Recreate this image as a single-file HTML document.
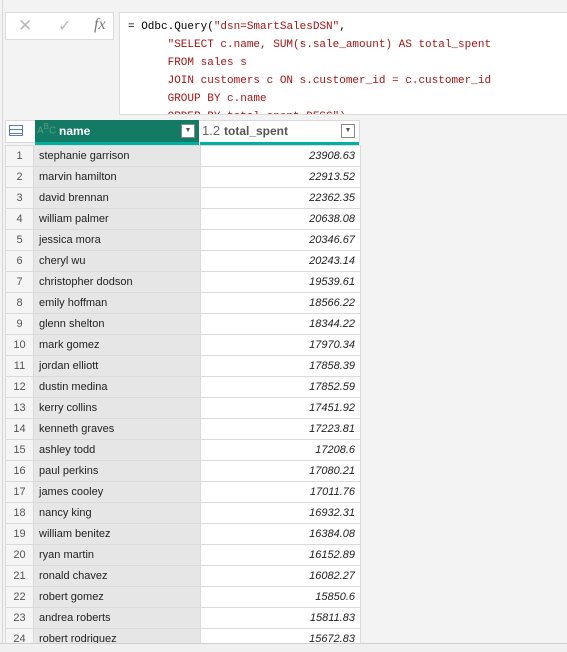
<!DOCTYPE html>
<html><head><style>
body{margin:0;width:567px;height:651px;background:#f3f3f3;font-family:"Liberation Sans",sans-serif;position:relative;overflow:hidden}
.abs{position:absolute}
#btns{left:5px;top:12px;width:109px;height:28px;background:#fff;border:1px solid #dcdcdc;box-sizing:border-box}
#fx{left:119px;top:12px;width:460px;height:103px;background:#fff;border:1px solid #dcdcdc;box-sizing:border-box;overflow:hidden}
#fx pre{margin:0;position:absolute;left:8px;top:5px;font-family:"Liberation Mono",monospace;font-size:11px;line-height:18px;color:#a31515}
table{position:absolute;left:5px;top:145px;border-collapse:collapse;font-size:11px;color:#222;table-layout:fixed}
td{border:1px solid #dadada;height:20px;padding:0 5px;white-space:nowrap;overflow:hidden}
td.n{width:19px;text-align:center;color:#555;background:#f5f5f5;padding:0 4px}
td.c{width:156px;background:#e6e6e6}
td.v{width:149px;background:#fff;text-align:right;font-style:italic}
#bottom{left:0;top:643px;width:567px;height:8px;background:#f0f0f0;border-top:1px solid #d0d0d0}
.dd{width:14px;height:14px;background:#fff;border:1px solid #888;box-sizing:border-box;font-size:7px;text-align:center;line-height:12px;color:#555}
</style></head><body>
<div class="abs" style="left:2px;top:0;width:1px;height:643px;background:#d8d8d8"></div>
<div class="abs" id="btns">
<span class="abs" style="left:12px;top:3px;font-size:17px;color:#bbb">✕</span>
<span class="abs" style="left:52px;top:3px;font-size:16px;color:#bbb">✓</span>
<span class="abs" style="left:88px;top:3px;font-size:16px;color:#777;font-family:'Liberation Serif',serif;font-style:italic">fx</span>
</div>
<div class="abs" id="fx"><pre><span style="color:#000">= Odbc.Query(</span>"dsn=SmartSalesDSN"<span style="color:#000">,</span>
      "SELECT c.name, SUM(s.sale_amount) AS total_spent
      FROM sales s
      JOIN customers c ON s.customer_id = c.customer_id
      GROUP BY c.name
      ORDER BY total_spent DESC")</pre></div>
<div class="abs" style="left:5px;top:120px;width:355px;height:23px;background:#fff;border:1px solid #dadada;box-sizing:border-box"></div>
<div class="abs" style="left:9px;top:125px;width:14px;height:11px;border:1px solid #5a7fb0;box-sizing:border-box;background:repeating-linear-gradient(#fff 0 3px,#5a7fb0 3px 4px)"></div>
<div class="abs" style="left:35px;top:120px;width:164px;height:22px;background:#137a63"></div>
<span class="abs" style="left:37px;top:122px;font-size:10px;color:#5b9b85">A<sup style="font-size:8px">B</sup>C</span>
<span class="abs" style="left:59px;top:124px;font-size:12px;color:#fff;font-weight:bold">name</span>
<div class="abs dd" style="left:181px;top:124px">▼</div>
<span class="abs" style="left:202px;top:123px;font-size:13px;color:#666">1.2</span>
<span class="abs" style="left:224px;top:124px;font-size:12px;color:#555;font-weight:bold">total_spent</span>
<div class="abs dd" style="left:341px;top:124px">▼</div>
<div class="abs" style="left:35px;top:142px;width:324px;height:3px;background:#00b0a0"></div>
<div class="abs" style="left:199px;top:142px;width:1px;height:3px;background:#fff"></div>
<table>
<tr><td class="n">1</td><td class="c">stephanie garrison</td><td class="v">23908.63</td></tr>
<tr><td class="n">2</td><td class="c">marvin hamilton</td><td class="v">22913.52</td></tr>
<tr><td class="n">3</td><td class="c">david brennan</td><td class="v">22362.35</td></tr>
<tr><td class="n">4</td><td class="c">william palmer</td><td class="v">20638.08</td></tr>
<tr><td class="n">5</td><td class="c">jessica mora</td><td class="v">20346.67</td></tr>
<tr><td class="n">6</td><td class="c">cheryl wu</td><td class="v">20243.14</td></tr>
<tr><td class="n">7</td><td class="c">christopher dodson</td><td class="v">19539.61</td></tr>
<tr><td class="n">8</td><td class="c">emily hoffman</td><td class="v">18566.22</td></tr>
<tr><td class="n">9</td><td class="c">glenn shelton</td><td class="v">18344.22</td></tr>
<tr><td class="n">10</td><td class="c">mark gomez</td><td class="v">17970.34</td></tr>
<tr><td class="n">11</td><td class="c">jordan elliott</td><td class="v">17858.39</td></tr>
<tr><td class="n">12</td><td class="c">dustin medina</td><td class="v">17852.59</td></tr>
<tr><td class="n">13</td><td class="c">kerry collins</td><td class="v">17451.92</td></tr>
<tr><td class="n">14</td><td class="c">kenneth graves</td><td class="v">17223.81</td></tr>
<tr><td class="n">15</td><td class="c">ashley todd</td><td class="v">17208.6</td></tr>
<tr><td class="n">16</td><td class="c">paul perkins</td><td class="v">17080.21</td></tr>
<tr><td class="n">17</td><td class="c">james cooley</td><td class="v">17011.76</td></tr>
<tr><td class="n">18</td><td class="c">nancy king</td><td class="v">16932.31</td></tr>
<tr><td class="n">19</td><td class="c">william benitez</td><td class="v">16384.08</td></tr>
<tr><td class="n">20</td><td class="c">ryan martin</td><td class="v">16152.89</td></tr>
<tr><td class="n">21</td><td class="c">ronald chavez</td><td class="v">16082.27</td></tr>
<tr><td class="n">22</td><td class="c">robert gomez</td><td class="v">15850.6</td></tr>
<tr><td class="n">23</td><td class="c">andrea roberts</td><td class="v">15811.83</td></tr>
<tr><td class="n">24</td><td class="c">robert rodriguez</td><td class="v">15672.83</td></tr>
</table>
<div class="abs" id="bottom"></div>
</body></html>
